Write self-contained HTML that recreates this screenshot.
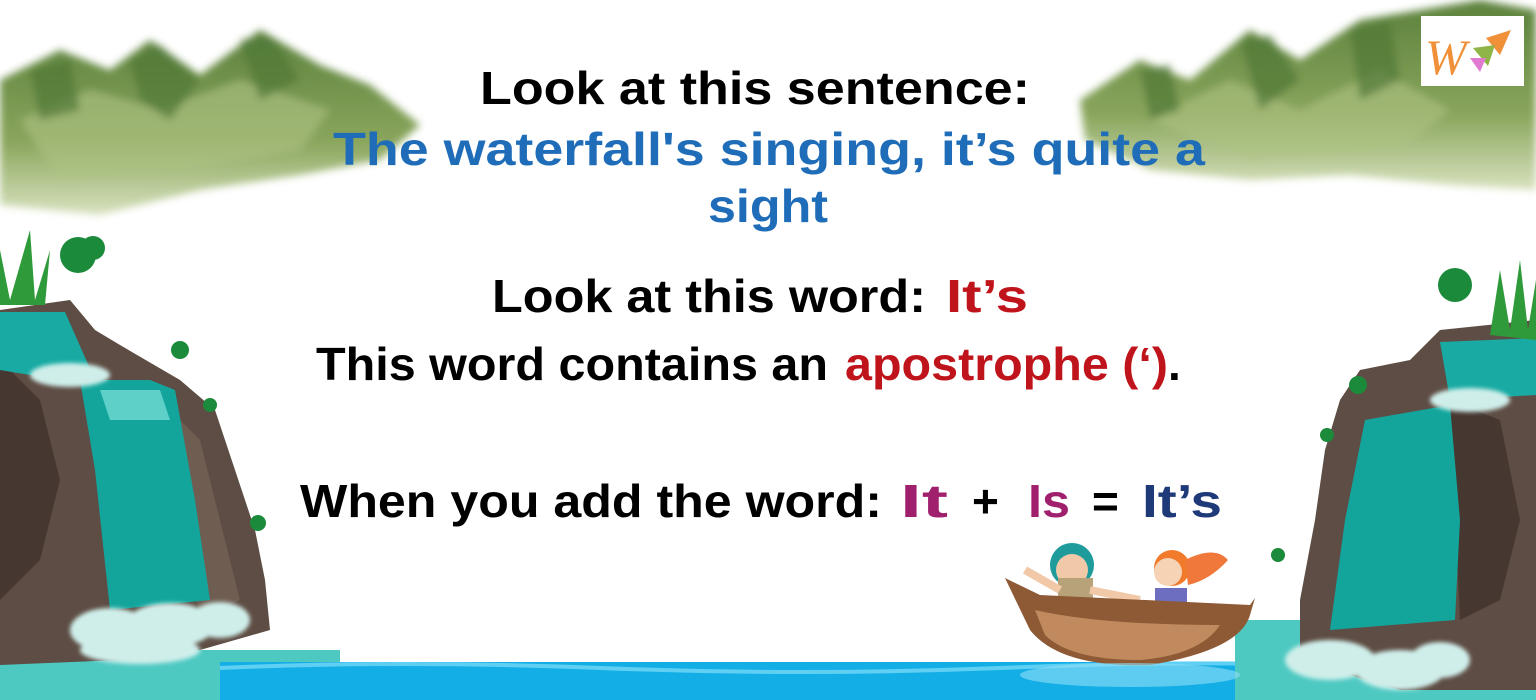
<!DOCTYPE html>
<html><head><meta charset="utf-8"><style>
html,body{margin:0;padding:0;background:#fff;width:1536px;height:700px;overflow:hidden}
svg{display:block}
text{font-family:"Comic Sans MS","Liberation Sans",sans-serif;font-weight:bold}
</style></head><body>
<svg width="1536" height="700" viewBox="0 0 1536 700" xmlns="http://www.w3.org/2000/svg">
<defs>
<filter id="bl" x="-10%" y="-10%" width="120%" height="120%"><feGaussianBlur stdDeviation="4"/></filter>
<filter id="bl2"><feGaussianBlur stdDeviation="2"/></filter>
<linearGradient id="mt" x1="0" y1="0" x2="0" y2="1"><stop offset="0" stop-color="#4a7428"/><stop offset="0.6" stop-color="#7d9c4a"/><stop offset="1" stop-color="#d4dfb8"/></linearGradient>
</defs>
<!-- mountains left -->
<g filter="url(#bl)" opacity="0.9">
<path d="M0 80 L60 50 L110 70 L150 40 L200 75 L260 30 L320 65 L370 85 L420 125 L380 160 L300 175 L200 190 L100 215 L0 205Z" fill="url(#mt)"/>
<path d="M20 120 L90 90 L160 110 L240 80 L330 110 L300 150 L180 170 L60 180Z" fill="#a7bd76" opacity="0.6"/>
<path d="M130 60 L160 45 L200 80 L170 120 L140 100Z M240 40 L270 35 L300 80 L260 100Z M30 70 L70 60 L80 110 L40 120Z" fill="#3d6a22" opacity="0.7"/>
</g>
<!-- mountains right -->
<g filter="url(#bl)" opacity="0.9">
<path d="M1080 100 L1140 60 L1190 80 L1250 30 L1300 60 L1360 20 L1420 10 L1480 0 L1536 10 L1536 190 L1450 185 L1350 175 L1250 180 L1150 170 L1085 140Z" fill="url(#mt)"/>
<path d="M1150 120 L1230 80 L1300 110 L1380 70 L1450 110 L1400 150 L1250 160Z" fill="#a7bd76" opacity="0.6"/>
<path d="M1240 40 L1270 35 L1300 80 L1260 110Z M1350 30 L1390 20 L1400 80 L1360 100Z M1140 70 L1170 65 L1180 110 L1150 120Z" fill="#3d6a22" opacity="0.7"/>
</g>
<!-- logo -->
<rect x="1421" y="16" width="103" height="70" fill="#fff"/>
<text x="1425" y="74" font-style="italic" font-size="50" fill="#f0913a" style="font-family:'Liberation Serif',serif;font-weight:normal">W</text>
<polygon points="1486,38 1511,30 1500,55" fill="#f0913a"/>
<polygon points="1473,48 1495,45 1488,66" fill="#8fb548"/>
<polygon points="1470,58 1486,58 1480,72" fill="#e07bd2"/>

<!-- bottom water -->
<rect x="0" y="650" width="340" height="50" fill="#4ec9c2"/>
<rect x="220" y="662" width="1120" height="38" fill="#14aee6"/>
<path d="M220 668 Q400 660 600 668 T1000 668 T1340 666" stroke="#5fd0f3" stroke-width="4" fill="none"/>
<rect x="1235" y="620" width="301" height="80" fill="#4ec9c2"/>

<!-- left waterfall -->
<path d="M0 310 L70 300 L95 330 L120 345 L180 380 L215 410 L235 470 L255 530 L265 580 L270 630 L200 650 L120 660 L0 665Z" fill="#5e4d44"/>
<path d="M0 360 L40 400 L60 480 L40 560 L0 600Z" fill="#463731"/>
<path d="M160 400 L200 440 L220 520 L240 600 L200 620Z" fill="#6f5d52"/>
<path d="M0 312 L65 312 L95 380 L60 380 L0 370Z" fill="#18aaa3"/>
<path d="M80 380 L150 380 L175 390 L195 500 L210 600 L110 610 L95 470Z" fill="#13a59c"/>
<path d="M100 390 L160 390 L170 420 L110 420Z" fill="#5fd0c8"/>
<g fill="#cfeeea" filter="url(#bl2)">
<ellipse cx="70" cy="375" rx="40" ry="12"/>
<ellipse cx="110" cy="630" rx="40" ry="22"/><ellipse cx="170" cy="625" rx="45" ry="22"/><ellipse cx="220" cy="620" rx="30" ry="18"/><ellipse cx="140" cy="650" rx="60" ry="14"/>
</g>
<path d="M0 250 L10 300 L30 230 L35 300 L50 250 L45 305 L0 305Z" fill="#2f9a3a"/>
<circle cx="78" cy="255" r="18" fill="#1b8a3a"/><circle cx="93" cy="248" r="12" fill="#1b8a3a"/>
<circle cx="180" cy="350" r="9" fill="#1b8a3a"/><circle cx="210" cy="405" r="7" fill="#1b8a3a"/><circle cx="258" cy="523" r="8" fill="#1b8a3a"/>

<!-- right waterfall -->
<path d="M1300 600 L1315 520 L1325 450 L1340 400 L1360 370 L1410 360 L1440 330 L1536 320 L1536 690 L1400 690 L1300 660Z" fill="#5e4d44"/>
<path d="M1450 400 L1500 420 L1520 520 L1500 600 L1460 620Z" fill="#463731"/>
<path d="M1440 342 L1536 338 L1536 395 L1450 400Z" fill="#18aaa3"/>
<path d="M1365 420 L1450 405 L1460 520 L1455 620 L1330 630 L1345 520Z" fill="#13a59c"/>
<g fill="#cfeeea" filter="url(#bl2)">
<ellipse cx="1470" cy="400" rx="40" ry="12"/>
<ellipse cx="1330" cy="660" rx="45" ry="20"/><ellipse cx="1400" cy="670" rx="45" ry="20"/><ellipse cx="1440" cy="660" rx="30" ry="18"/>
</g>
<path d="M1490 335 L1500 270 L1510 330 L1520 260 L1528 330 L1536 280 L1536 340Z" fill="#2f9a3a"/>
<circle cx="1455" cy="285" r="17" fill="#1b8a3a"/><circle cx="1358" cy="385" r="9" fill="#1b8a3a"/><circle cx="1327" cy="435" r="7" fill="#1b8a3a"/><circle cx="1278" cy="555" r="7" fill="#1b8a3a"/>

<!-- boat -->
<circle cx="1072" cy="565" r="22" fill="#1f9b9b"/><circle cx="1072" cy="570" r="16" fill="#f1c9a8"/>
<rect x="1058" y="578" width="35" height="38" fill="#b8a27a"/>
<path d="M1025 570 L1060 590 M1090 590 L1140 600" stroke="#f1c9a8" stroke-width="8"/>
<circle cx="1172" cy="568" r="18" fill="#f27a2b"/><circle cx="1168" cy="572" r="14" fill="#f6d3b5"/>
<path d="M1185 560 Q1215 545 1228 560 Q1210 580 1188 585Z" fill="#f0783a"/>
<rect x="1155" y="588" width="32" height="32" fill="#6d6ec0"/>
<path d="M1005 578 L1040 595 L1250 605 L1255 598 L1250 615 Q1240 650 1150 665 Q1060 668 1030 630 Z" fill="#8e5a36"/>
<path d="M1035 610 Q1100 625 1220 625 Q1200 655 1140 660 Q1070 660 1045 635Z" fill="#c08a5e"/>
<ellipse cx="1130" cy="675" rx="110" ry="12" fill="#8fe0f7" opacity="0.6"/>

<!-- text -->
<text x="480" y="104" font-size="46" fill="#000" textLength="550" lengthAdjust="spacingAndGlyphs">Look at this sentence:</text>
<text x="333" y="165" font-size="46" fill="#1f6db8" textLength="872" lengthAdjust="spacingAndGlyphs">The waterfall's singing, it’s quite a</text>
<text x="708" y="222" font-size="46" fill="#1f6db8" textLength="120" lengthAdjust="spacingAndGlyphs">sight</text>
<text x="492" y="312" font-size="46" fill="#000" textLength="434" lengthAdjust="spacingAndGlyphs">Look at this word:</text>
<text x="946" y="312" font-size="46" fill="#c0141c" textLength="82" lengthAdjust="spacingAndGlyphs">It’s</text>
<text x="316" y="380" font-size="46" fill="#000" textLength="512" lengthAdjust="spacingAndGlyphs">This word contains an</text>
<text x="845" y="380" font-size="46" fill="#c0141c" textLength="323" lengthAdjust="spacingAndGlyphs">apostrophe (‘)</text>
<text x="1168" y="380" font-size="46" fill="#000">.</text>
<text x="300" y="517" font-size="46" fill="#000" textLength="582" lengthAdjust="spacingAndGlyphs">When you add the word:</text>
<text x="900" y="517" font-size="46" fill="#a0206e" textLength="48" lengthAdjust="spacingAndGlyphs">It</text>
<text x="972" y="517" font-size="46" fill="#000">+</text>
<text x="1028" y="517" font-size="46" fill="#a0206e" textLength="42" lengthAdjust="spacingAndGlyphs">Is</text>
<text x="1092" y="517" font-size="46" fill="#000">=</text>
<text x="1142" y="517" font-size="46" fill="#1e3a78" textLength="80" lengthAdjust="spacingAndGlyphs">It’s</text>
</svg>
</body></html>
